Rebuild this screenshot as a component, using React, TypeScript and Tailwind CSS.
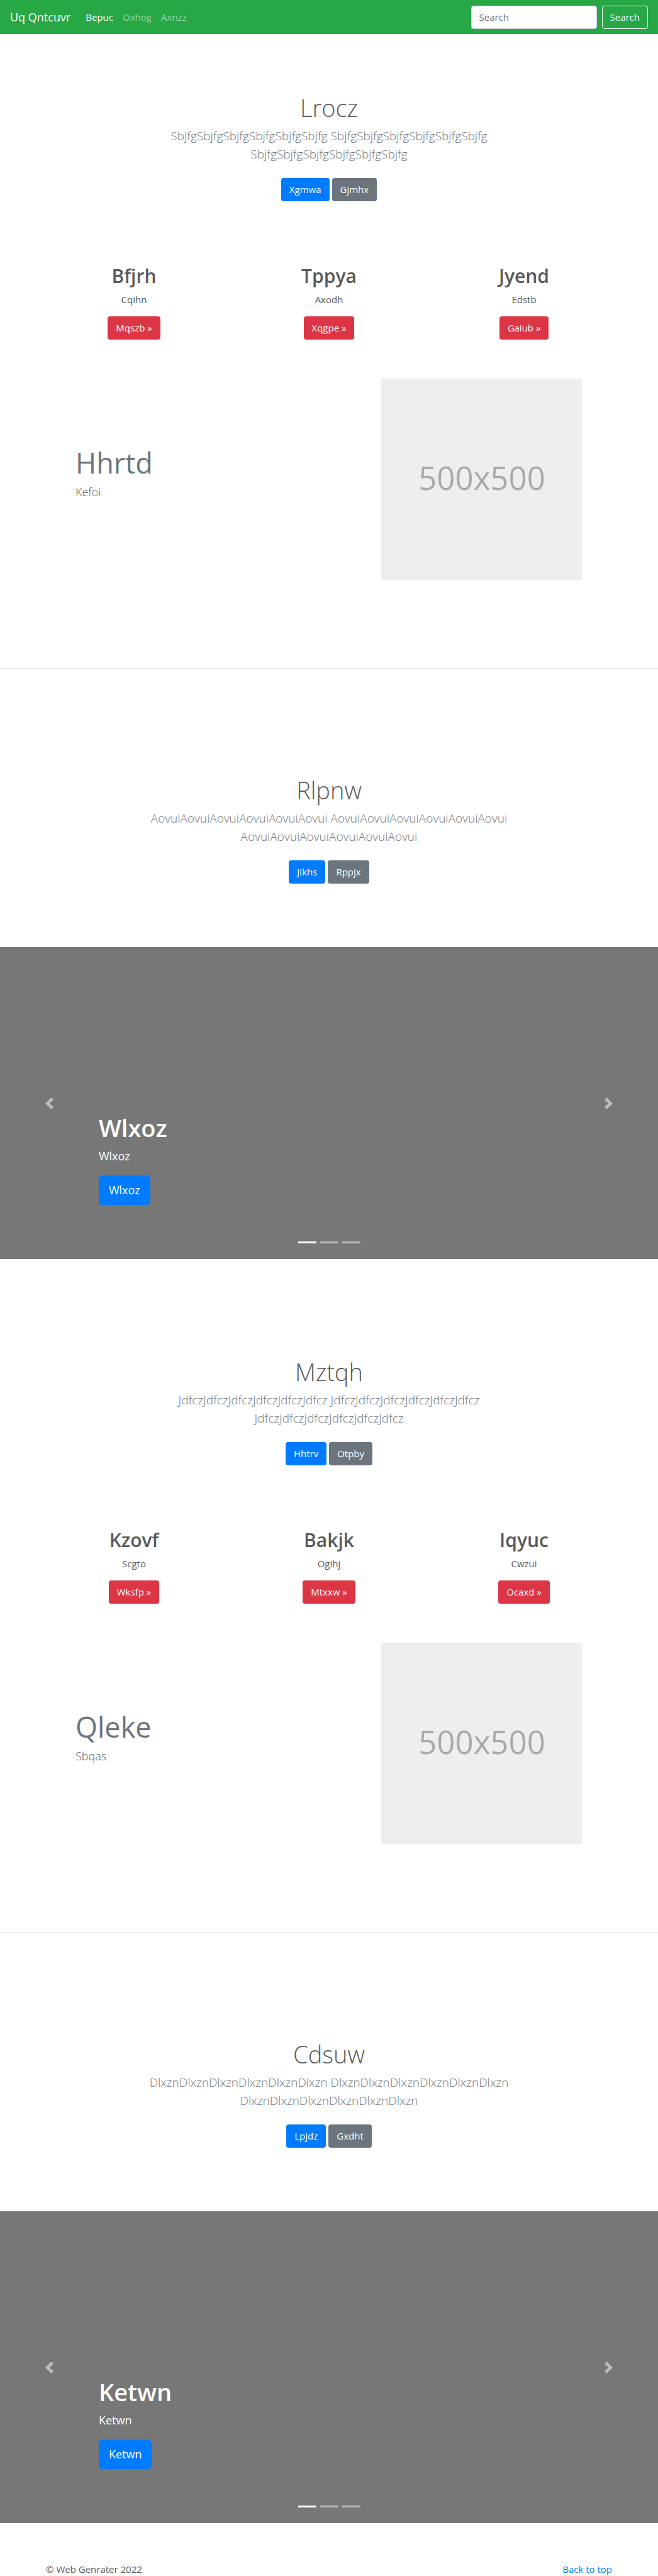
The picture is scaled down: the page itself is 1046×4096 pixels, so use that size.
type Action = { primary: string; secondary: string };
type HeroData = Action & { title: string; word: string };
type Feature = { title: string; text: string; action: string };
type BlockData = {
  intro: HeroData;
  features: Feature[];
  featurette: { title: string; text: string };
  outro: HeroData;
  slide: string;
};

const blocks: BlockData[] = [
  {
    intro: { title: "Lrocz", word: "Sbjfg", primary: "Xgmwa", secondary: "Gjmhx" },
    features: [
      { title: "Bfjrh", text: "Cqihn", action: "Mqszb" },
      { title: "Tppya", text: "Axodh", action: "Xqgpe" },
      { title: "Jyend", text: "Edstb", action: "Gaiub" },
    ],
    featurette: { title: "Hhrtd", text: "Kefoi" },
    outro: { title: "Rlpnw", word: "Aovui", primary: "Jikhs", secondary: "Rppjx" },
    slide: "Wlxoz",
  },
  {
    intro: { title: "Mztqh", word: "Jdfcz", primary: "Hhtrv", secondary: "Otpby" },
    features: [
      { title: "Kzovf", text: "Scgto", action: "Wksfp" },
      { title: "Bakjk", text: "Ogihj", action: "Mtxxw" },
      { title: "Iqyuc", text: "Cwzui", action: "Ocaxd" },
    ],
    featurette: { title: "Qleke", text: "Sbqas" },
    outro: { title: "Cdsuw", word: "Dlxzn", primary: "Lpjdz", secondary: "Gxdht" },
    slide: "Ketwn",
  },
];

function Navbar() {
  return (
    <nav className="flex h-[54px] items-center bg-[#28a745] px-4">
      <a href="#" className="text-[18px] text-white">Uq Qntcuvr</a>
      <ul className="ml-6 flex gap-[15px]">
        <li><a href="#" className="text-white">Bepuc</a></li>
        <li><a href="#" className="text-white/50">Oxhog</a></li>
        <li><a href="#" className="text-white/50">Axnzz</a></li>
      </ul>
      <form className="ml-auto flex gap-2">
        <input
          type="search"
          aria-label="Search"
          placeholder="Search"
          className="h-[37px] w-[200px] rounded border border-[#ced4da] bg-white px-3 placeholder:text-[#6c757d]"
        />
        <button type="button" className="h-[37px] rounded border border-[#f8f9fa] px-3 text-[#f8f9fa]">
          Search
        </button>
      </form>
    </nav>
  );
}

function Hero({ title, word, primary, secondary }: HeroData) {
  const run = word.repeat(6);
  return (
    <section className="flex flex-col items-center px-4 text-center">
      <h1 className="text-[38px] leading-[46px] font-light">{title}</h1>
      <p className="mt-2 max-w-[620px] text-[19px] leading-[29px] font-light text-[#6c757d]">
        {run} {run} {run}
      </p>
      <div className="mt-[23px] flex gap-1">
        <a href="#" className="rounded bg-[#007bff] px-[13px] leading-[37px] text-white">{primary}</a>
        <a href="#" className="rounded bg-[#6c757d] px-[13px] leading-[37px] text-white">{secondary}</a>
      </div>
    </section>
  );
}

function Features({ items }: { items: Feature[] }) {
  return (
    <section className="mx-auto grid max-w-[930px] grid-cols-3">
      {items.map((item) => (
        <div key={item.title} className="flex flex-col items-center">
          <h2 className="text-[30px] leading-[37px] font-semibold">{item.title}</h2>
          <p className="mt-2 leading-[23px]">{item.text}</p>
          <a href="#" className="mt-[15px] rounded bg-[#dc3545] px-[13px] leading-[37px] text-white">
            {item.action} »
          </a>
        </div>
      ))}
    </section>
  );
}

function Featurette({ title, text }: { title: string; text: string }) {
  return (
    <section className="mx-auto flex max-w-[930px] items-start justify-between px-[62px]">
      <div className="pt-[110px]">
        <h2 className="text-[45px] leading-[48px] text-[#6c757d]">{title}</h2>
        <p className="mt-2 text-[18px] leading-[29px] font-light">{text}</p>
      </div>
      <div className="flex aspect-square w-[320px] items-center justify-center bg-[#eeeeee] pb-[6px] text-[51px] text-[#aaaaaa]">
        500x500
      </div>
    </section>
  );
}

function Chevron({ path }: { path: string }) {
  return (
    <svg viewBox="0 0 8 8" className="size-[19px] fill-white" aria-hidden="true">
      <path d={path} />
    </svg>
  );
}

function Carousel({ label }: { label: string }) {
  return (
    <section className="relative flex h-[496px] flex-col justify-end bg-[#777777] px-[15%] pb-[86px] text-white">
      <h2 className="text-[38px] leading-[46px] font-semibold">{label}</h2>
      <p className="mt-2 text-[18px] leading-[29px]">{label}</p>
      <a href="#" className="mt-4 self-start rounded-md bg-[#007bff] px-4 text-[18px] leading-[47px]">{label}</a>
      <button type="button" aria-label="Previous" className="absolute inset-y-0 left-0 flex w-[15%] items-center justify-center opacity-50">
        <Chevron path="M5.25 0l-4 4 4 4 1.5-1.5-2.5-2.5 2.5-2.5-1.5-1.5z" />
      </button>
      <button type="button" aria-label="Next" className="absolute inset-y-0 right-0 flex w-[15%] items-center justify-center opacity-50">
        <Chevron path="M2.75 0l-1.5 1.5 2.5 2.5-2.5 2.5 1.5 1.5 4-4-4-4z" />
      </button>
      <div className="absolute inset-x-0 bottom-[25px] flex justify-center gap-[6px]">
        <button type="button" aria-label="Slide 1" className="h-[3px] w-[29px] bg-white" />
        <button type="button" aria-label="Slide 2" className="h-[3px] w-[29px] bg-white/50" />
        <button type="button" aria-label="Slide 3" className="h-[3px] w-[29px] bg-white/50" />
      </div>
    </section>
  );
}

function Block({ data }: { data: BlockData }) {
  return (
    <div className="pt-[94px] pb-[62px]">
      <Hero {...data.intro} />
      <div className="mt-[100px]">
        <Features items={data.features} />
      </div>
      <div className="mt-[62px]">
        <Featurette {...data.featurette} />
      </div>
      <hr className="mt-[140px] mb-[170px] border-black/10" />
      <Hero {...data.outro} />
      <div className="mt-[101px]">
        <Carousel label={data.slide} />
      </div>
    </div>
  );
}

export default function App() {
  return (
    <div className="bg-white font-['Open_Sans','Noto_Sans',sans-serif] text-[15px] text-[#5a5a5a]">
      <Navbar />
      <main>
        {blocks.map((data) => (
          <Block key={data.slide} data={data} />
        ))}
      </main>
      <footer className="mx-auto flex max-w-[930px] justify-between px-[15px] leading-[22px]">
        <p>© Web Genrater 2022</p>
        <a href="#" className="text-[#007bff]">Back to top</a>
      </footer>
    </div>
  );
}
